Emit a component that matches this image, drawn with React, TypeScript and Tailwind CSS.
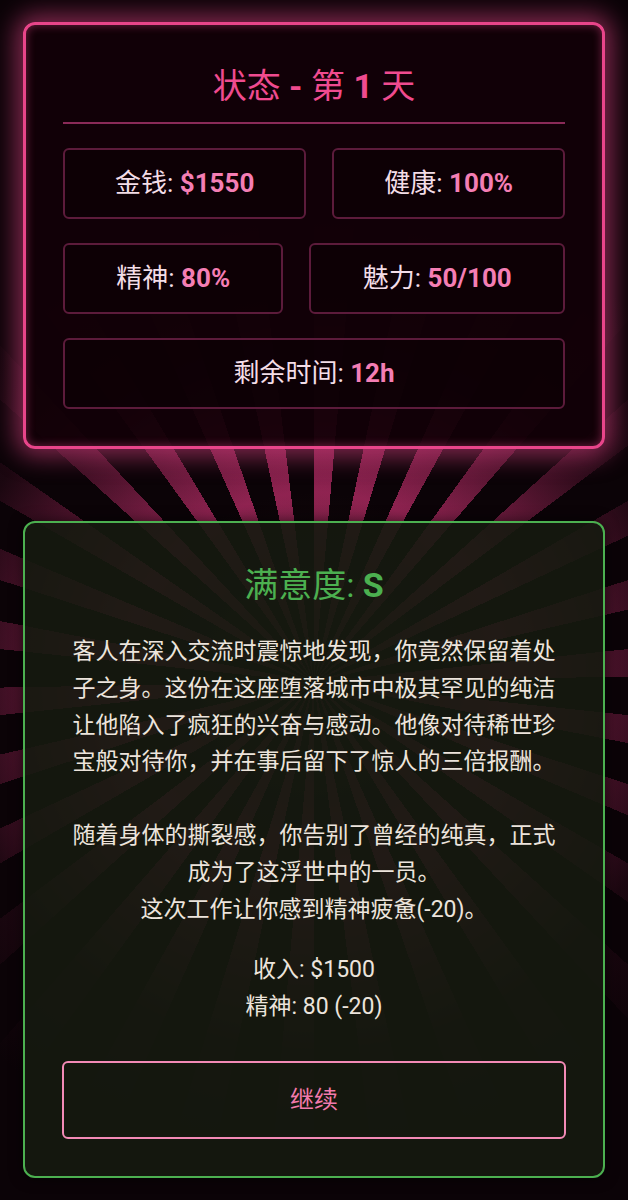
const stats = [
  { label: "金钱", value: "$1550" },
  { label: "健康", value: "100%" },
  { label: "精神", value: "80%" },
  { label: "魅力", value: "50/100" },
  { label: "剩余时间", value: "12h" },
];

function StatBox({ label, value }: { label: string; value: string }) {
  return (
    <div className="flex-auto rounded-md border-2 border-[#5c1b3b] bg-[#0b0005]/70 px-5 py-[16px] text-center text-[26px] leading-[35px] text-[#f3dde7]">
      {label}: <span className="font-bold text-[#f47eb4]">{value}</span>
    </div>
  );
}

function StatusPanel() {
  return (
    <section className="rounded-xl border-[3px] border-[#e8458a] bg-[#120007]/90 px-[37px] pb-[37px] pt-[37px] shadow-[0_0_24px_7px_rgba(232,69,138,0.55),inset_0_0_10px_rgba(232,69,138,0.45)]">
      <h2 className="border-b-2 border-[#8a2a58] pb-3 text-center text-[34px] leading-[48px] text-[#ef4b8f]">
        状态 <span className="font-bold">-</span> 第 <span className="font-bold">1</span> 天
      </h2>
      <div className="mt-[24px] flex flex-wrap gap-x-[26px] gap-y-[24px]">
        {stats.map((s) => (
          <StatBox key={s.label} label={s.label} value={s.value} />
        ))}
      </div>
    </section>
  );
}

function ResultPanel() {
  return (
    <section className="rounded-xl border-2 border-[#4cb050] bg-[#151a10]/90 px-[37px] pb-[37px] pt-[38px] text-center text-[#ece4dc] shadow-[0_0_14px_rgba(0,0,0,0.6)]">
      <h2 className="text-[34px] leading-[48px] text-[#4cb050]">
        满意度: <span className="font-bold">S</span>
      </h2>
      <div className="mt-[25px] text-[23px] leading-[1.6]">
        <p className="mb-[1.6em]">
          客人在深入交流时震惊地发现，你竟然保留着处子之身。这份在这座堕落城市中极其罕见的纯洁让他陷入了疯狂的兴奋与感动。他像对待稀世珍宝般对待你，并在事后留下了惊人的三倍报酬。
        </p>
        <p>随着身体的撕裂感，你告别了曾经的纯真，正式成为了这浮世中的一员。</p>
        <p>这次工作让你感到精神疲惫(-20)。</p>
        <div className="mt-6">
          <p>收入: $1500</p>
          <p>精神: 80 (-20)</p>
        </div>
      </div>
      <button className="mt-[35px] w-full rounded-md border-2 border-[#f38ab6] py-[21px] text-[24px] leading-[32px] text-[#f27aac]">
        继续
      </button>
    </section>
  );
}

export default function App() {
  return (
    <div className="relative min-h-[1200px] overflow-hidden bg-[#0b0307] font-['Roboto','Noto_Sans_CJK_SC',sans-serif]">
      {/* sunburst behind the panels, faded out towards the edges */}
      <div className="pointer-events-none absolute inset-0 bg-[repeating-conic-gradient(from_0deg_at_50%_56%,rgba(214,52,120,0.65)_0deg_5deg,transparent_5deg_12deg)]" />
      <div className="pointer-events-none absolute inset-0 bg-[radial-gradient(circle_at_50%_56%,rgba(40,26,22,0.7)_0px,transparent_190px,rgba(11,3,7,0.5)_290px,rgba(11,3,7,0.88)_370px,#0b0307_490px)]" />
      <div className="relative flex flex-col gap-[72px] px-[23px] pb-10 pt-[22px]">
        <StatusPanel />
        <ResultPanel />
      </div>
    </div>
  );
}
